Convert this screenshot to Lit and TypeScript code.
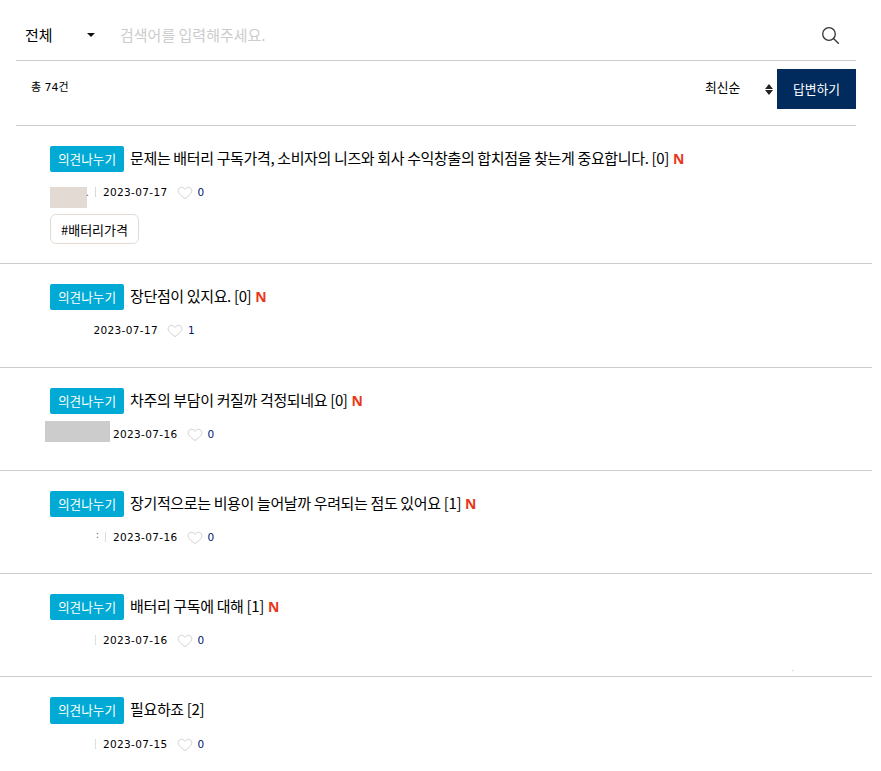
import { LitElement, html, css, svg } from "lit";
import { customElement } from "lit/decorators.js";

interface Post {
  title: string; count: number; isNew: boolean; date: string; likes: number;
  authorWidth: number; sep: string; mark?: string; markTop?: number; cover?: [number, number, number, number, string];
  tag?: string; tall?: boolean; gap?: number;
}

const POSTS: Post[] = [
  { title: "문제는 배터리 구독가격, 소비자의 니즈와 회사 수익창출의 합치점을 찾는게 중요합니다.", count: 0, isNew: true, date: "2023-07-17", likes: 0, authorWidth: 37, sep: "#d9d9d9", mark: ".", markTop: 5, cover: [0, 5, 37, 21, "#e3dbd3"], tag: "#배터리가격" },
  { title: "장단점이 있지요.", count: 0, isNew: true, date: "2023-07-17", likes: 1, authorWidth: 27.5, sep: "transparent", tall: true },
  { title: "차주의 부담이 커질까 걱정되네요", count: 0, isNew: true, date: "2023-07-16", likes: 0, authorWidth: 60, sep: "transparent", cover: [-5, -3, 65, 21, "#cccccc"], gap: 3 },
  { title: "장기적으로는 비용이 늘어날까 우려되는 점도 있어요", count: 1, isNew: true, date: "2023-07-16", likes: 0, authorWidth: 47, sep: "#e3dbd3", mark: ":", markTop: 2 },
  { title: "배터리 구독에 대해", count: 1, isNew: true, date: "2023-07-16", likes: 0, authorWidth: 37, sep: "#cfe3ea" },
  { title: "필요하죠", count: 2, isNew: false, date: "2023-07-15", likes: 0, authorWidth: 37, sep: "#cfe3ea" },
];

const heart = svg`<path d="M8 12.6C3.6 9.4 1.2 7.2 1.2 4.7 1.2 2.7 2.7 1.3 4.5 1.3c1.4 0 2.6.8 3.5 2.1.9-1.3 2.1-2.1 3.5-2.1 1.8 0 3.3 1.4 3.3 3.4 0 2.5-2.4 4.7-6.8 7.9z" fill="none" stroke="#cfcfcf" stroke-width="1"/>`;

@customElement("app-root")
export class AppRoot extends LitElement {
  static styles = css`
    :host { display: block; width: 872px; height: 771px; overflow: hidden; position: relative; background: #fff; font-family: "Noto Sans CJK KR", "Noto Sans", sans-serif; color: #000; }
    .head { margin: 0 16px; }
    .search { height: 61px; box-sizing: border-box; border-bottom: 1px solid #ccc; display: flex; align-items: center; padding-top: 10px; }
    .scope { width: 104px; padding-left: 9px; box-sizing: border-box; display: flex; align-items: center; font-size: 15px; line-height: 20px; }
    .scope span { width: 62px; }
    .caret { width: 0; height: 0; border-left: 4px solid transparent; border-right: 4px solid transparent; border-top: 4px solid #111; }
    .ph { flex: 1; font-size: 15px; color: #ccc; line-height: 20px; }
    .glass { width: 18px; height: 18px; margin-right: 16px; }
    .bar { height: 65px; box-sizing: border-box; border-bottom: 1px solid #ccc; display: flex; align-items: flex-start; }
    .total { font-family: "DejaVu Sans", "Noto Sans CJK KR", sans-serif; font-size: 11px; line-height: 16px; margin: 19px 0 0 15px; flex: 1; }
    .sort { font-size: 12.8px; line-height: 16px; margin-top: 18px; width: 72px; display: flex; align-items: center; }
    .sort span { flex: 1; }
    .arrows { display: flex; flex-direction: column; gap: 1px; margin: 4px 4px 0 0; }
    .up { width: 0; height: 0; border-left: 4px solid transparent; border-right: 4px solid transparent; border-bottom: 5px solid #222; }
    .down { width: 0; height: 0; border-left: 4px solid transparent; border-right: 4px solid transparent; border-top: 5px solid #222; }
    .answer { width: 79px; height: 40px; box-sizing: border-box; padding-bottom: 2px; margin-top: 8px; background: #002b5c; color: #fff; font-size: 12.8px; display: flex; align-items: center; justify-content: center; }
    .post { height: 103px; box-sizing: border-box; border-bottom: 1px solid #ccc; padding: 20px 0 0 50px; }
    .post.first { height: 138px; }
    .post.tall { height: 104px; }
    .titleRow { display: flex; align-items: center; height: 26px; }
    .post.last .titleRow { height: 27px; }
    .post.last .badge { height: 27px; }
    .post.last .title { padding-bottom: 3px; }
    .badge { width: 74px; height: 26px; box-sizing: border-box; padding-bottom: 2px; background: #00aad4; border-radius: 2px; color: #fff; font-size: 12.6px; display: flex; align-items: center; justify-content: center; margin-right: 6px; flex: none; }
    .title { font-size: 15px; line-height: 24px; padding-bottom: 2px; letter-spacing: -0.36px; white-space: nowrap; }
    .n { color: #e8381b; font-weight: 700; font-family: "Noto Sans", sans-serif; font-size: 14px; margin-left: 4px; letter-spacing: 0; }
    .meta { display: flex; align-items: center; height: 20px; margin-top: 10px; font-size: 11px; font-family: "DejaVu Sans", sans-serif; }
    .author { position: relative; height: 20px; flex: none; }
    .cover { position: absolute; }
    .markc { position: absolute; right: -2px; font-size: 10px; color: #4a6a8a; }
    .sep { width: 1px; height: 10px; margin: 0 7px 0 8px; flex: none; }
    .date { font-size: 10.5px; letter-spacing: 0.35px; }
    .heart { width: 16px; height: 14px; margin: 2px 5px 0 9px; flex: none; }
    .likes { color: #00206e; font-size: 10.5px; }
    .tag { display: flex; align-items: center; justify-content: center; box-sizing: border-box; width: 89px; height: 30px; border: 1px solid #e3dbd3; border-radius: 6px; font-size: 13px; margin-top: 12px; }
    .speck { position: absolute; left: 792px; top: 670px; width: 2px; height: 1px; background: #ddd; }
  `;

  renderPost(p: Post, i: number) {
    return html`<div class="post ${i === 0 ? "first" : ""} ${p.tall ? "tall" : ""} ${i === POSTS.length - 1 ? "last" : ""}">
      <div class="titleRow">
        <div class="badge">의견나누기</div>
        <div class="title">${p.title} [${p.count}]${p.isNew ? html`<span class="n">N</span>` : ""}</div>
      </div>
      <div class="meta">
        <div class="author" style="width:${p.authorWidth}px">
          ${p.cover ? html`<div class="cover" style="left:${p.cover[0]}px;top:${p.cover[1]}px;width:${p.cover[2]}px;height:${p.cover[3]}px;background:${p.cover[4]}"></div>` : ""}
          ${p.mark ? html`<span class="markc" style="top:${p.markTop}px">${p.mark}</span>` : ""}
        </div>
        ${p.gap ? html`<div style="width:${p.gap}px"></div>` : html`<div class="sep" style="background:${p.sep}"></div>`}
        <span class="date">${p.date}</span>
        <svg class="heart" viewBox="0 0 16 14">${heart}</svg>
        <span class="likes">${p.likes}</span>
      </div>
      ${p.tag ? html`<div class="tag">${p.tag}</div>` : ""}
    </div>`;
  }

  render() {
    return html`
      <div class="head">
        <div class="search">
          <div class="scope"><span>전체</span><i class="caret"></i></div>
          <div class="ph">검색어를 입력해주세요.</div>
          <svg class="glass" viewBox="0 0 18 18"><circle cx="7" cy="8" r="6.3" fill="none" stroke="#333" stroke-width="1.3"/><path d="M11.5 12.5l5.3 5.3" stroke="#333" stroke-width="1.3" fill="none"/></svg>
        </div>
        <div class="bar">
          <div class="total">총 74건</div>
          <div class="sort"><span>최신순</span><div class="arrows"><i class="up"></i><i class="down"></i></div></div>
          <div class="answer">답변하기</div>
        </div>
      </div>
      ${POSTS.map((p, i) => this.renderPost(p, i))}
      <div class="speck"></div>
    `;
  }
}
